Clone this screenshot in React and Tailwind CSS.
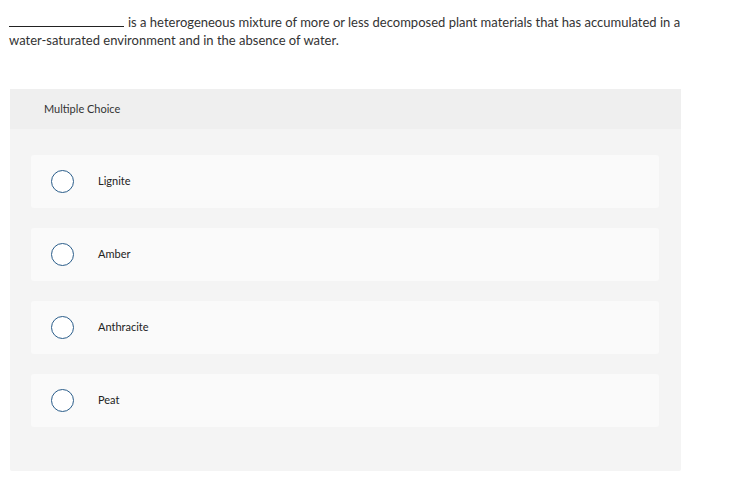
const choices = ["Lignite", "Amber", "Anthracite", "Peat"];

export default function App() {
  return (
    <div className="w-[743px] h-[483px] bg-white font-['Lato','Open_Sans',sans-serif] text-[#333]">
      <div className="pt-[13px] pl-[9px] pr-[50px] text-[13px] leading-[18px]">
        <span className="inline-block w-[115px] border-b border-[#222] mr-[4px] align-baseline h-[11px]" />
        is a heterogeneous mixture of more or less decomposed plant materials that has accumulated in a water-saturated environment and in the absence of water.
      </div>

      <div className="ml-[10px] mt-[40px] w-[671px] h-[382px] bg-[#f4f4f4] rounded-[2px]">
        <div className="h-[40px] bg-[#efefef] flex items-center pl-[34px] text-[11px] text-[#333]">
          Multiple Choice
        </div>
        <div className="pt-[26px] pl-[21px] pr-[22px] flex flex-col gap-[20px]">
          {choices.map((c) => (
            <div key={c} className="h-[53px] bg-[#fafafa] rounded-[3px] flex items-center pl-[20px]">
              <span className="w-[23px] h-[23px] rounded-full border-[1.5px] border-[#2a5d8a] bg-white shrink-0" />
              <span className="ml-[24px] text-[11px] text-[#222]">{c}</span>
            </div>
          ))}
        </div>
      </div>
    </div>
  );
}
